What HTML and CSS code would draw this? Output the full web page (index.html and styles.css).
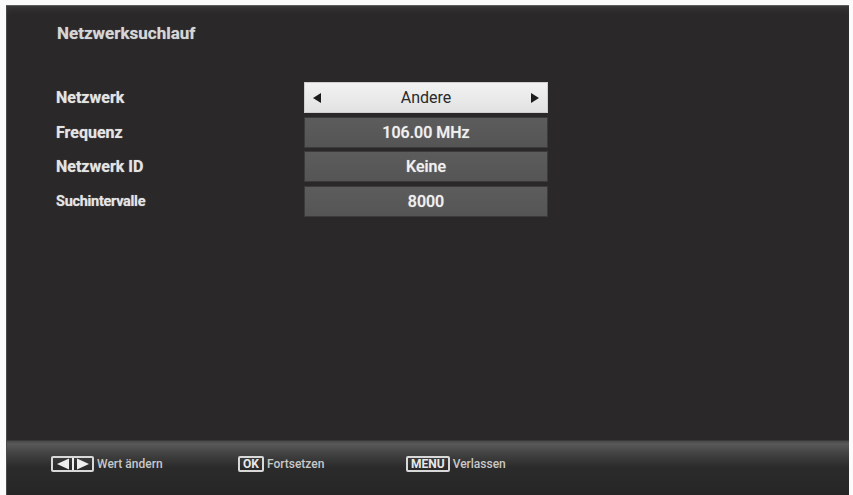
FILE: index.html
```html
<!DOCTYPE html>
<html lang="de">
<head>
  <meta charset="UTF-8" />
  <title>Netzwerksuchlauf</title>
  <link rel="stylesheet" href="styles.css">
</head>
<body>
  <div class="screen">
    <h1 class="title">Netzwerksuchlauf</h1>

    <div class="settings">
      <div class="label">Netzwerk</div>
      <div class="value active">
        <span class="arrow left"></span>
        <span class="text">Andere</span>
        <span class="arrow right"></span>
      </div>

      <div class="label">Frequenz</div>
      <div class="value">106.00 MHz</div>

      <div class="label">Netzwerk ID</div>
      <div class="value">Keine</div>

      <div class="label small">Suchintervalle</div>
      <div class="value">8000</div>
    </div>

    <div class="spacer"></div>

    <div class="footer">
      <div class="hint">
        <span class="key arrows">
          <svg width="38" height="12" viewBox="0 0 38 12">
            <polygon points="3,6 15,0.5 15,11.5" fill="#eee" />
            <rect x="18" y="0" width="2" height="12" fill="#eee" />
            <polygon points="35,6 23,0.5 23,11.5" fill="#eee" />
          </svg>
        </span>
        <span>Wert ändern</span>
      </div>
      <div class="hint">
        <span class="key">OK</span>
        <span>Fortsetzen</span>
      </div>
      <div class="hint">
        <span class="key">MENU</span>
        <span>Verlassen</span>
      </div>
    </div>
  </div>
</body>
</html>
```

FILE: styles.css
```css
body {
  margin: 0;
  padding: 5px 4px 0 6px;
  background: #fbfbfb;
  font-family: Roboto, "Liberation Sans", sans-serif;
}
.screen {
  height: 490px;
  display: flex;
  flex-direction: column;
  background: #2a2829;
  border-top: 1px solid #5e5d5e;
  border-left: 1px solid #4a494a;
  box-shadow: inset 0 6px 8px -4px #3e3d3e;
  box-sizing: border-box;
}
.title {
  margin: 17px 0 0 50px;
  font-size: 17px;
  font-weight: bold;
  color: #d6d6d6;
  text-shadow: 0 0 1px #888;
}
.settings {
  display: grid;
  grid-template-columns: 248px 244px;
  grid-auto-rows: 31px;
  row-gap: 3.5px;
  margin: 39px 0 0 49px;
}
.label {
  display: flex;
  align-items: center;
  font-size: 16px;
  font-weight: bold;
  color: #e4e4e4;
  text-shadow: 0 0 1px #999;
}
.label.small {
  font-size: 14.5px;
  letter-spacing: -0.3px;
}
.value {
  display: flex;
  align-items: center;
  justify-content: center;
  background: linear-gradient(#5d5c5d, #565556);
  border: 1px solid #3c3b3c;
  box-sizing: border-box;
  font-size: 16px;
  font-weight: 500;
  color: #f0f0f0;
  text-shadow: 0 0 1px #bbb;
}
.value.active {
  justify-content: space-between;
  padding: 0 8px;
  background: linear-gradient(#f2f2f2, #e2e2e2);
  border-color: #cfcfcf;
  color: #2a2a2a;
  font-weight: normal;
  text-shadow: none;
}
.arrow {
  width: 0;
  height: 0;
  border-top: 5px solid transparent;
  border-bottom: 5px solid transparent;
}
.arrow.left {
  border-right: 8px solid #1c1c1c;
}
.arrow.right {
  border-left: 8px solid #1c1c1c;
}
.spacer {
  flex: 1;
}
.footer {
  height: 55px;
  display: flex;
  align-items: center;
  padding: 0 0 8px 44px;
  background: linear-gradient(#4a494a 0, #5a595a 3px, #444344 12px, #2c2b2c 26px, #272627);
  border-top: 1px solid #3a393a;
  box-sizing: border-box;
}
.hint {
  display: flex;
  align-items: center;
  gap: 3px;
  font-size: 12px;
  font-weight: 500;
  color: #c8c8c8;
}
.hint:nth-child(1) {
  width: 187px;
}
.hint:nth-child(2) {
  width: 168px;
}
.key {
  display: inline-flex;
  align-items: center;
  justify-content: center;
  height: 16px;
  padding: 0 3px;
  border: 2px solid #d8d8d8;
  border-radius: 2px;
  box-sizing: border-box;
  font-size: 12px;
  font-weight: bold;
  color: #e8e8e8;
}
.key.arrows {
  width: 43px;
  padding: 0;
}
.key.arrows svg {
  display: block;
}
```
